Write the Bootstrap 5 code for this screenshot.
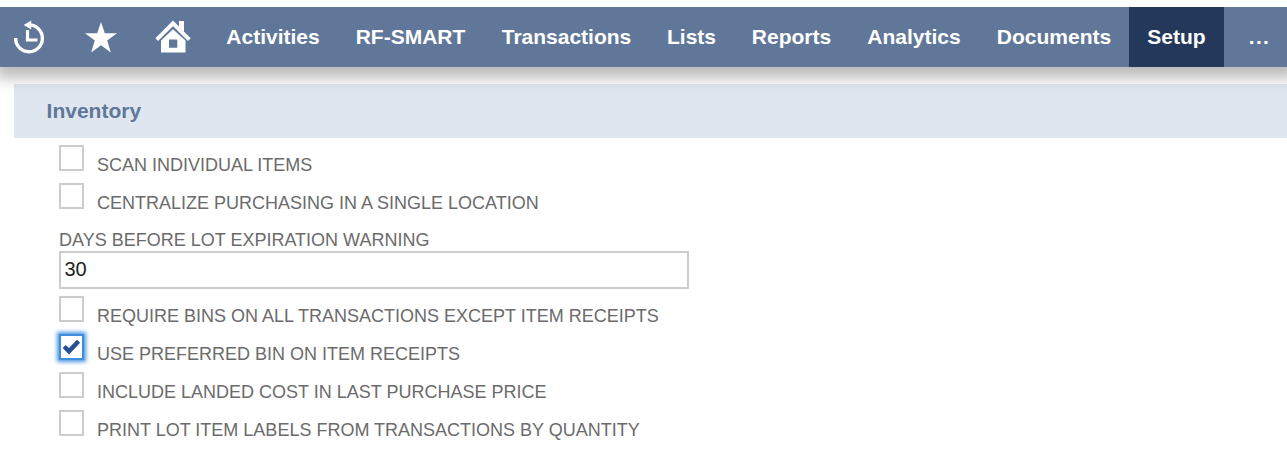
<!DOCTYPE html>
<html lang="en">
<head>
<meta charset="utf-8">
<title>Inventory Setup</title>
<link rel="stylesheet" href="https://cdn.jsdelivr.net/npm/bootstrap@5.3.0/dist/css/bootstrap.min.css">
<style>
body{font-family:"Liberation Sans",Arial,sans-serif;background:#fff;overflow:hidden}
.topbar{height:60px;margin-top:7px;background:#607799;box-shadow:3px 3px 14px 8px rgba(0,0,0,.27);clip-path:inset(0 0 -40px 0);z-index:2}
.topbar .nav-link,.topbar .nav-link.active{height:60px;padding:0;font-size:21px;font-weight:700;line-height:60px;color:#fff;text-align:center;flex:none}
.topbar .nav-link.active{background:#24385b}
.w-icon{width:72px}.first-icon{margin-left:-7px}
.w-act{width:128px}.w-rf{width:147px}.w-tra{width:165px}.w-lis{width:85px}.w-rep{width:115px}.w-ana{width:130px}.w-doc{width:150px}.w-set{width:95px}
.topbar .w-more{width:71px;letter-spacing:1.4px}
.topbar svg{display:block;width:72px;height:60px}
.section-title{margin:17px 0 0 14px;height:54px;padding-left:32.6px;background:#dfe6ef;color:#607799;font-size:21px;font-weight:700;line-height:54px}
.prefs{padding:7px 0 0 59px;color:#6b6b6b;font-size:18px}
.check-row{height:38px}
.check-row .form-check-input{width:25px;height:26px;margin:0;border:2px solid #ccc;border-radius:0;background-color:#fff;flex:none}
.check-row .form-check-input:checked{background-color:#fff;border-color:#3f8ddb;box-shadow:0 0 4px 2px #4b98e2;background-size:21px 22px;background-position:center;background-image:url("data:image/svg+xml,%3csvg xmlns='http://www.w3.org/2000/svg' viewBox='0 0 21 22'%3e%3cpath d='M3.2 10.5L8 15.3L17.5 5.3' fill='none' stroke='%23244f94' stroke-width='4.4'/%3e%3c/svg%3e")}
.check-row label{margin-left:13px;line-height:20px;padding-top:10px;white-space:nowrap}
.days-label{display:block;line-height:20px;margin-top:9px;height:21px}
.days-input{width:630px;height:38px;padding:0 3.5px 2px;border:2px solid #ccc;border-radius:0;font-size:20px;line-height:32px;color:#222;margin-bottom:7px}
</style>
</head>
<body>
<nav class="topbar navbar-nav flex-row position-relative">
<a class="nav-link w-icon first-icon" href="#" aria-label="Recent"><svg viewBox="-7 7 72 60"><path d="M15.6 38A13.4 13.4 0 1 0 29 24.9" fill="none" stroke="#fff" stroke-width="3.4"/><path d="M23.6 25L31.2 20.5V29.5Z" fill="#fff"/><path d="M27.5 30V40H37.5" fill="none" stroke="#fff" stroke-width="3.2"/></svg></a>
<a class="nav-link w-icon" href="#" aria-label="Shortcuts"><svg viewBox="65 7 72 60"><path d="M101 22L104.8 33.3H117L107.2 40.4L110.8 52.5L101 45.2L91.2 52.5L94.8 40.4L85 33.3H97.2Z" fill="#fff"/></svg></a>
<a class="nav-link w-icon" href="#" aria-label="Home"><svg viewBox="137 7 72 60"><path d="M179 21H184V32L179 27Z" fill="#fff"/><path d="M156.7 39.7L173 23.3L189.3 39.7" fill="none" stroke="#fff" stroke-width="3.9"/><path fill-rule="evenodd" d="M161 40.5L173 29.3L185.5 40.5V52.5H161ZM169 39.5V47.7H177.3V39.5Z" fill="#fff"/></svg></a>
<a class="nav-link w-act" href="#">Activities</a>
<a class="nav-link w-rf" href="#">RF-SMART</a>
<a class="nav-link w-tra" href="#">Transactions</a>
<a class="nav-link w-lis" href="#">Lists</a>
<a class="nav-link w-rep" href="#">Reports</a>
<a class="nav-link w-ana" href="#">Analytics</a>
<a class="nav-link w-doc" href="#">Documents</a>
<a class="nav-link w-set active" href="#">Setup</a>
<a class="nav-link w-more" href="#">...</a>
</nav>
<main>
<h2 class="section-title">Inventory</h2>
<form class="prefs">
<div class="check-row d-flex align-items-start"><input class="form-check-input" type="checkbox" id="c1"><label for="c1">SCAN INDIVIDUAL ITEMS</label></div>
<div class="check-row d-flex align-items-start"><input class="form-check-input" type="checkbox" id="c2"><label for="c2">CENTRALIZE PURCHASING IN A SINGLE LOCATION</label></div>
<label class="days-label" for="days">DAYS BEFORE LOT EXPIRATION WARNING</label>
<input class="form-control days-input" id="days" type="text" value="30">
<div class="check-row d-flex align-items-start"><input class="form-check-input" type="checkbox" id="c3"><label for="c3">REQUIRE BINS ON ALL TRANSACTIONS EXCEPT ITEM RECEIPTS</label></div>
<div class="check-row d-flex align-items-start"><input class="form-check-input" type="checkbox" id="c4" checked><label for="c4">USE PREFERRED BIN ON ITEM RECEIPTS</label></div>
<div class="check-row d-flex align-items-start"><input class="form-check-input" type="checkbox" id="c5"><label for="c5">INCLUDE LANDED COST IN LAST PURCHASE PRICE</label></div>
<div class="check-row d-flex align-items-start"><input class="form-check-input" type="checkbox" id="c6"><label for="c6">PRINT LOT ITEM LABELS FROM TRANSACTIONS BY QUANTITY</label></div>
</form>
</main>
<script src="https://cdn.jsdelivr.net/npm/bootstrap@5.3.0/dist/js/bootstrap.bundle.min.js"></script>
</body>
</html>
